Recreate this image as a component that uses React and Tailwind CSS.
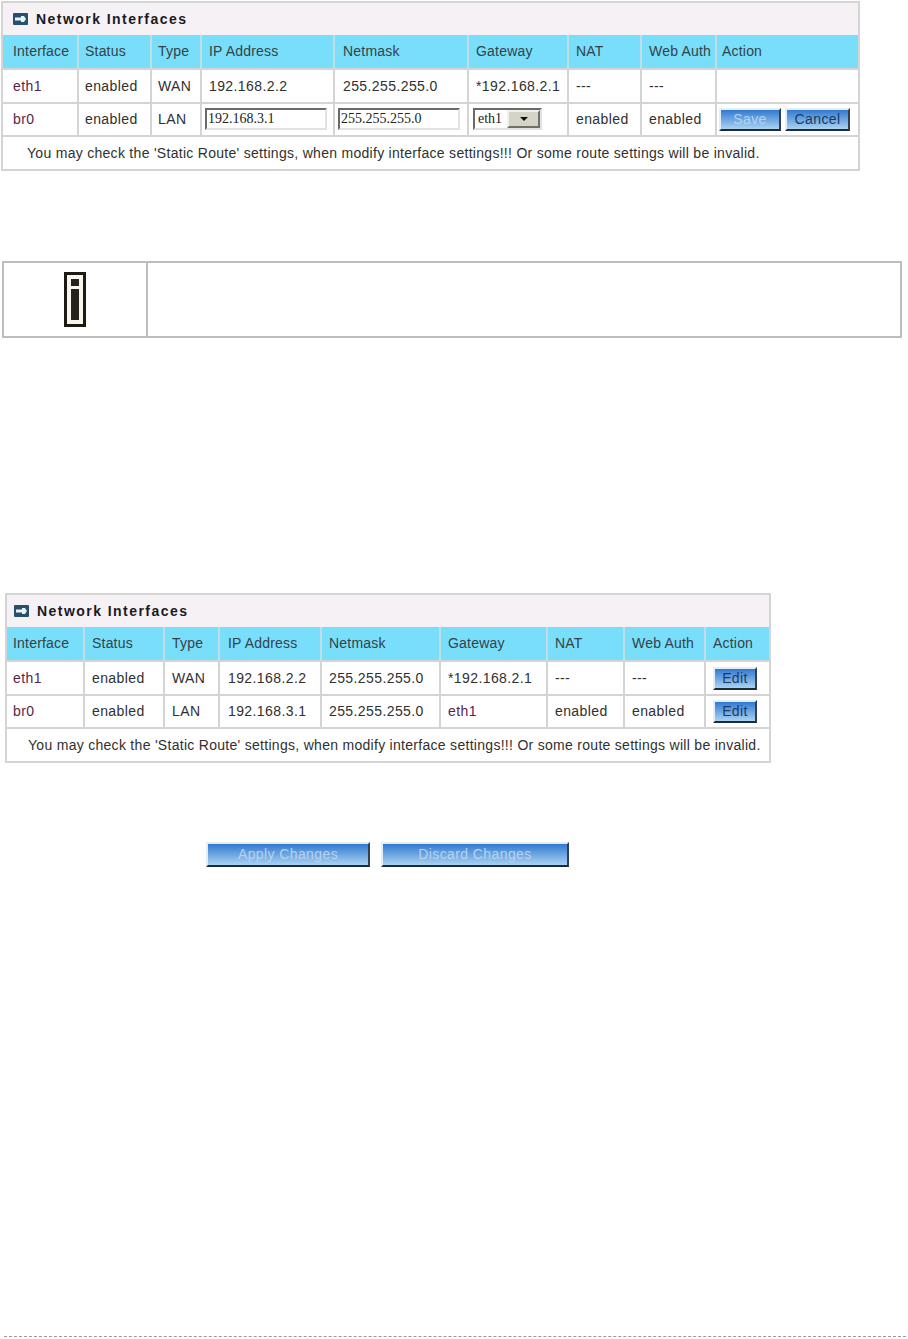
import React from "react";

const cellBorder = "border-2 border-[#d4d4d4]";

// Old admin UI button: blue gradient with a bevelled edge
const BevelButton = ({ label, faded, className = "" }) => (
  <button
    type="button"
    className={`flex items-center justify-center border-2 border-t-[#e4eef6] border-l-[#e4eef6] border-r-[#30404e] border-b-[#1e2a36] bg-gradient-to-b from-[#3079cf] to-[#a9d2f2] text-[14px] tracking-[0.4px] ${
      faded ? "text-[#b4d4f0]" : "text-[#1c3a63]"
    } ${className}`}
  >
    {label}
  </button>
);

const PortIcon = () => (
  <svg width="15" height="12" viewBox="0 0 15 12" className="shrink-0">
    <rect width="15" height="12" rx="1" fill="#25506e" />
    <path d="M2 4.5h6V3h3l2 3-2 3H8V7.5H2z" fill="#e8f2f8" />
  </svg>
);

const TitleBar = ({ titlePad }) => (
  <div className={`flex h-[32px] items-center gap-[8px] bg-[#f6f1f4] ${titlePad}`}>
    <PortIcon />
    <span className="text-[14px] font-bold tracking-[1.45px] text-[#1a1a22]">Network Interfaces</span>
  </div>
);

const headers = ["Interface", "Status", "Type", "IP Address", "Netmask", "Gateway", "NAT", "Web Auth", "Action"];

const NiTable = ({ widths, outer, titlePad, rowHeights, cellPad, headPad, rows, noteIndent }) => (
  <div className={`border-2 border-[#d4d4d4] ${outer}`}>
    <TitleBar titlePad={titlePad} />
    <table className="table-fixed border-collapse">
      <colgroup>
        {widths.map((w, i) => (
          <col key={i} style={{ width: w }} />
        ))}
      </colgroup>
      <tbody>
        <tr className="bg-[#78def9] text-[#33424a] tracking-[0.2px]" style={{ height: rowHeights[0] }}>
          {headers.map((h, i) => (
            <td key={h} className={`border-x-2 border-y-0 border-x-[#c4dde4] first:border-l-0 last:border-r-0 text-left ${headPad[i]}`}>
              {h}
            </td>
          ))}
        </tr>
        {rows.map((row, r) => (
          <tr key={r} className="bg-white text-[#303030]" style={{ height: rowHeights[r + 1] }}>
            {row.map((c, i) => (
              <td key={i} className={`${cellBorder} first:border-l-0 last:border-r-0 text-left tracking-[0.4px] ${cellPad[i]}`}>
                {c}
              </td>
            ))}
          </tr>
        ))}
        <tr className="bg-white text-[#303030]">
          <td colSpan={9} className={`${cellBorder} border-x-0 border-b-0 h-[33px] tracking-[0.29px] ${noteIndent}`}>
            You may check the 'Static Route' settings, when modify interface settings!!! Or some route settings will be invalid.
          </td>
        </tr>
      </tbody>
    </table>
  </div>
);

const Link = ({ children }) => <span className="text-[#5a1f52]">{children}</span>;

const TextBox = ({ value, className }) => (
  <input
    readOnly
    value={value}
    className={`-mt-px block h-[22px] w-[122px] border-2 border-t-[#6a6a6a] border-l-[#6a6a6a] border-r-[#e2e2e2] border-b-[#e2e2e2] bg-white pl-px font-['Liberation_Serif',serif] text-[14px] tracking-normal text-[#222] ${className}`}
  />
);

const GatewaySelect = () => (
  <div className="-ml-[3px] -mt-px flex h-[22px] w-[69px] border-2 border-t-[#6a6a6a] border-l-[#6a6a6a] border-r-[#e2e2e2] border-b-[#e2e2e2] bg-white font-['Liberation_Serif',serif] text-[14px] tracking-normal text-[#222]">
    <span className="flex-1 pl-[3px] leading-[18px]">eth1</span>
    <span className="flex w-[33px] items-center justify-center border-2 border-t-[#f2f0e8] border-l-[#f2f0e8] border-r-[#70706a] border-b-[#70706a] bg-[#d6d3c8]">
      <span className="h-0 w-0 border-x-[4px] border-t-[4px] border-x-transparent border-t-[#111]" />
    </span>
  </div>
);

const InfoIcon = () => (
  <svg width="22" height="55" viewBox="0 0 22 55">
    <rect width="22" height="55" fill="#1d1a16" />
    <rect x="3" y="3" width="16" height="49" fill="#f8f6ec" />
    <rect x="7" y="7" width="8" height="7" fill="#25211c" />
    <rect x="7" y="17" width="8" height="31" fill="#25211c" />
  </svg>
);

const firstRows = [
  [<Link>eth1</Link>, "enabled", "WAN", "192.168.2.2", "255.255.255.0", "*192.168.2.1", "---", "---", ""],
  [
    <Link>br0</Link>,
    "enabled",
    "LAN",
    <TextBox value="192.168.3.1" className="-ml-[4px]" />,
    <TextBox value="255.255.255.0" className="-ml-[5px]" />,
    <GatewaySelect />,
    "enabled",
    "enabled",
    <div className="flex gap-[4px]">
      <BevelButton label="Save" faded className="h-[23px] w-[62px]" />
      <BevelButton label="Cancel" className="h-[23px] w-[65px]" />
    </div>,
  ],
];

const EditButton = () => <BevelButton label="Edit" className="h-[23px] w-[44px]" />;

const secondRows = [
  [<Link>eth1</Link>, "enabled", "WAN", "192.168.2.2", "255.255.255.0", "*192.168.2.1", "---", "---", <EditButton />],
  [<Link>br0</Link>, "enabled", "LAN", "192.168.3.1", "255.255.255.0", <Link>eth1</Link>, "enabled", "enabled", <EditButton />],
];

export default function App() {
  return (
    <div className="flex h-[1339px] w-[908px] flex-col overflow-hidden bg-white font-['Liberation_Sans',Arial,sans-serif] text-[14px]">
      <NiTable
        outer="mt-px ml-[1px] w-[859px]"
        titlePad="pl-[10px]"
        widths={[75, 73, 50, 133, 134, 100, 73, 75, 142]}
        rowHeights={[34, 34, 33]}
        headPad={["pl-[10px]", "pl-[6px]", "pl-[6px]", "pl-[7px]", "pl-[8px]", "pl-[7px]", "pl-[7px]", "pl-[7px]", "pl-[5px]"]}
        cellPad={["pl-[10px]", "pl-[6px]", "pl-[6px]", "pl-[7px]", "pl-[8px]", "pl-[7px]", "pl-[7px]", "pl-[7px]", "pl-[2px]"]}
        rows={firstRows}
        noteIndent="pl-[24px]"
      />

      <div className="mt-[90px] ml-[2px] flex h-[77px] w-[900px] border-2 border-[#bdbdbd]">
        <div className="flex w-[144px] items-center justify-center border-r-2 border-[#bdbdbd]">
          <InfoIcon />
        </div>
      </div>

      <NiTable
        outer="mt-[255px] ml-[5px] w-[766px]"
        titlePad="pl-[7px]"
        widths={[77, 80, 55, 102, 119, 107, 77, 81, 64]}
        rowHeights={[34, 34, 33]}
        headPad={["pl-[6px]", "pl-[7px]", "pl-[7px]", "pl-[8px]", "pl-[7px]", "pl-[7px]", "pl-[7px]", "pl-[7px]", "pl-[7px]"]}
        cellPad={["pl-[6px]", "pl-[7px]", "pl-[7px]", "pl-[8px]", "pl-[7px]", "pl-[7px]", "pl-[7px]", "pl-[7px]", "pl-[7px]"]}
        rows={secondRows}
        noteIndent="pl-[21px]"
      />

      <div className="mt-[79px] ml-[206px] flex gap-[11px]">
        <BevelButton label="Apply Changes" faded className="h-[25px] w-[164px]" />
        <BevelButton label="Discard Changes" faded className="h-[25px] w-[188px]" />
      </div>

      <div className="mt-auto mb-[2px] ml-[4px] w-[902px] border-t border-dashed border-[#9a9a9a]" />
    </div>
  );
}
